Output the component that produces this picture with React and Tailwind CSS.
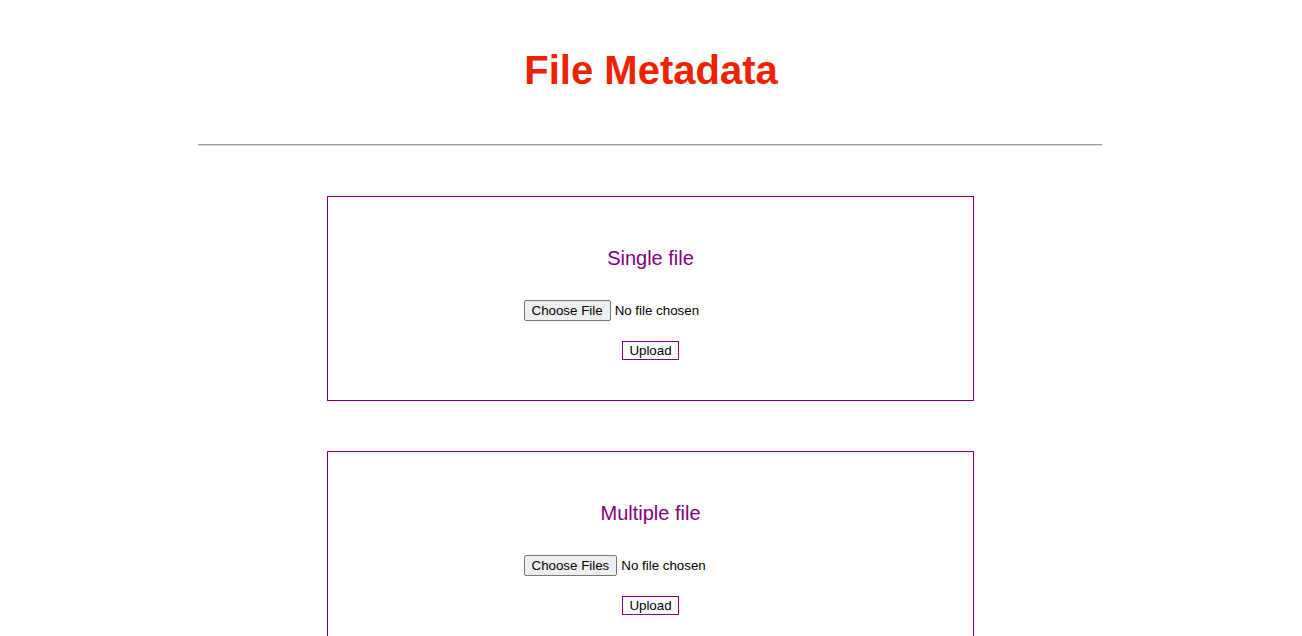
export default function App() {
  const ff = { fontFamily: '"Liberation Sans", Arial, sans-serif' };
  const Box = ({ title, multiple }) => (
    <div className="ml-[327px] w-[647px] border border-[#800080] px-10 pt-10 pb-10 text-center">
      <h2 className="mt-[10px] h-[23px] text-[20px] leading-[23px] text-[#800080]" style={ff}>
        {title}
      </h2>
      <div className="mt-[30px] flex h-[21px] items-center justify-center">
        <input
          type="file"
          multiple={multiple}
          className="w-[254px] text-[13.33px] leading-[15px] text-black file:mr-[4px] file:h-[21px] file:rounded-[2px] file:border file:border-solid file:border-[#767676] file:bg-[#efefef] file:px-[7px] file:py-0 file:text-[13.33px] file:text-black"
          style={ff}
        />
      </div>
      <div className="mt-[20px] flex h-[19px] justify-center">
        <button
          className="h-[19px] border border-[#800080] bg-white px-[6px] py-0 text-[13.33px] leading-[17px] text-black"
          style={ff}
        >
          Upload
        </button>
      </div>
    </div>
  );
  return (
    <div className="min-h-screen bg-white" style={ff}>
      <h1 className="pt-[47px] text-center text-[40px] font-bold leading-[46px] text-[#ee2200]">File Metadata</h1>
      <div className="ml-[198px] mt-[51px] h-[2px] w-[904px] border-t border-b border-t-[#9a9a9a] border-b-[#dcdcdc]" />
      <div className="mt-[50px] flex flex-col gap-[50px]">
        <Box title="Single file" />
        <Box title="Multiple file" multiple />
      </div>
    </div>
  );
}
